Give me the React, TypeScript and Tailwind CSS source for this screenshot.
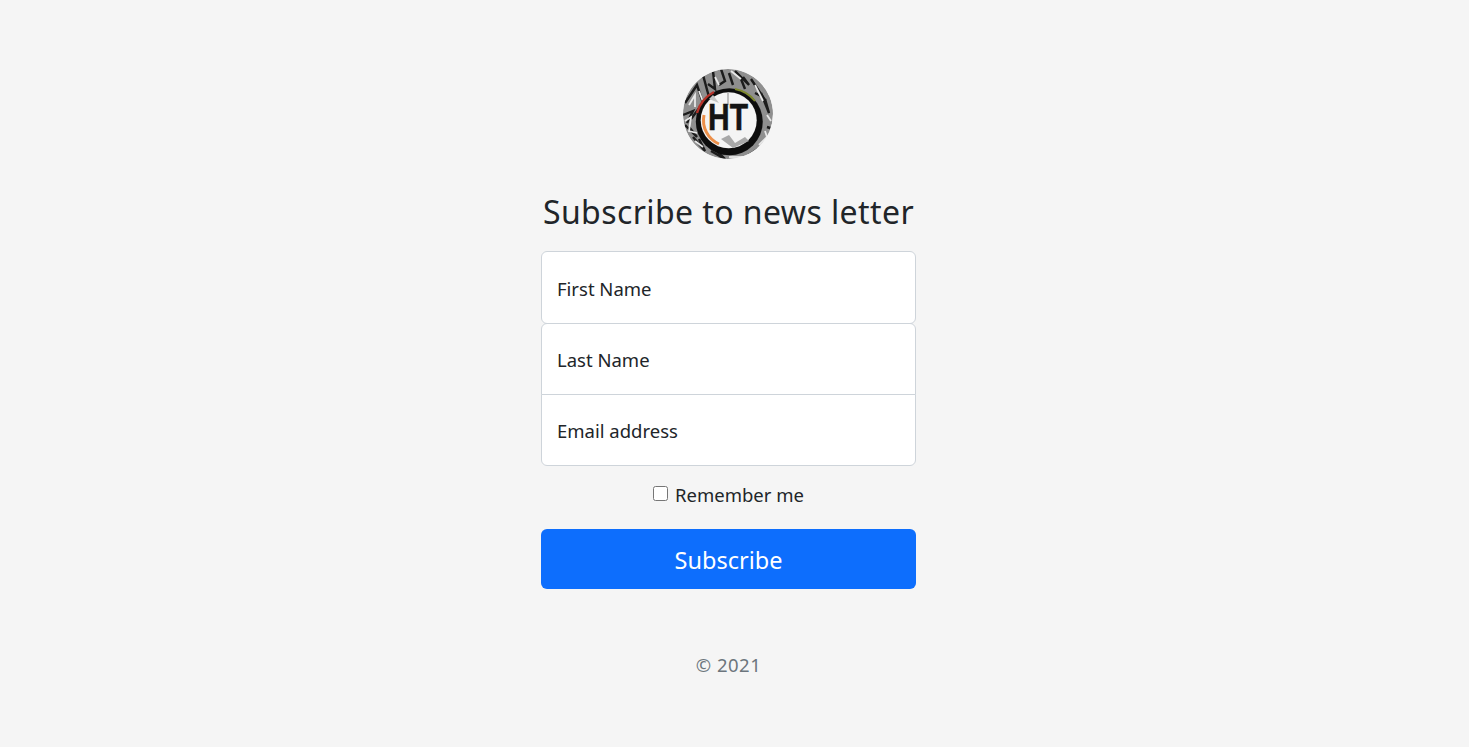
const streaks = [
  'M2 34 L14 16 L20 34 L8 50',
  'M20 6 L26 28',
  'M30 2 L32 20 L25 15',
  'M38 0 L42 12 L36 16',
  'M52 2 L66 16 L60 8',
  'M68 10 L80 28 L72 24',
  'M78 24 L86 44 L82 30',
  'M84 58 L90 60 L80 76',
  'M66 86 L78 78 L72 88',
  'M6 58 L14 68 L2 56',
  'M10 68 L22 82 L16 70',
  'M28 82 L42 90 L32 80',
  'M0 46 L10 42 L4 54',
  'M46 4 L50 16',
  'M58 10 L62 20',
];

const lightStreaks = [
  'M6 36 L12 26 L12 38',
  'M2 52 L8 48 L6 62 L14 64',
  'M12 72 L20 78',
  'M32 8 L36 16',
  'M48 2 L58 10',
  'M72 16 L80 32',
  'M84 46 L88 52',
  'M82 62 L84 68 L76 76',
  'M46 88 L60 88',
  'M16 22 L22 38',
];

const Logo = () => (
  <svg width="90" height="90" viewBox="0 0 90 90" className="block">
    <defs>
      <clipPath id="logo-clip">
        <circle cx="45" cy="45" r="45" />
      </clipPath>
      <filter id="logo-soft">
        <feGaussianBlur stdDeviation="0.7" />
      </filter>
    </defs>
    <g clipPath="url(#logo-clip)">
      <g filter="url(#logo-soft)">
        <rect width="90" height="90" fill="#8f8f8f" />
        <g fill="none" stroke="#1a1a1a" strokeWidth="2.4">
          {streaks.map((d) => (
            <path key={d} d={d} />
          ))}
        </g>
        <g fill="none" stroke="#e8e8e8" strokeWidth="1.8">
          {lightStreaks.map((d) => (
            <path key={d} d={d} />
          ))}
        </g>
        <circle cx="46.3" cy="52.7" r="33.5" fill="#111111" />
        <circle cx="45.7" cy="51.3" r="28" fill="#f4f4f4" />
        <path d="M38 70 L46 66 L52 74 L62 68 L66 72 L50 79 Z" fill="#a8a8a8" />
        <path d="M26 30 L30 26 L36 34 Z" fill="#c4c4c4" />
        <path d="M45 24 L45 36" stroke="#888888" strokeWidth="1" />
        <path d="M21 46 A26 26 0 0 0 36 75" fill="none" stroke="#ec8f4a" strokeWidth="3" />
        <path d="M14 44 A33.5 33.5 0 0 1 31 23" fill="none" stroke="#b5332b" strokeWidth="2.4" />
        <path d="M52 20 A33.5 33.5 0 0 1 72 32" fill="none" stroke="#7f8a2e" strokeWidth="2" />
      </g>
      <text
        x="45"
        y="61"
        textAnchor="middle"
        textLength="40"
        lengthAdjust="spacingAndGlyphs"
        fill="#141414"
        stroke="#141414"
        strokeWidth="0.5"
        fontFamily="'Liberation Sans', sans-serif"
        fontWeight="700"
        fontSize="36"
      >
        HT
      </text>
    </g>
  </svg>
);

const App = () => {
  return (
    <main className="min-h-[747px] bg-[#f5f5f5] flex justify-center pt-[69px] pr-[12px] text-[#212529] font-['Noto_Sans','Open_Sans',sans-serif]">
      <form className="w-[375px] flex flex-col items-center" onSubmit={(e) => e.preventDefault()}>
        <div className="rounded-full overflow-hidden mb-[34px] -ml-px">
          <Logo />
        </div>
        <h1 className="text-[32px] leading-[38px] font-normal mb-[20px] whitespace-nowrap tracking-[0.42px]">
          Subscribe to news letter
        </h1>

        <input
          type="text"
          placeholder="First Name"
          className="w-full h-[73px] -mb-px pt-[1px] px-[15px] bg-white border border-[#ced4da] rounded-[6px] text-[18.5px] placeholder:text-[#212529] outline-none"
        />
        <input
          type="text"
          placeholder="Last Name"
          className="relative w-full h-[72px] -mb-px px-[15px] bg-white border border-[#ced4da] rounded-t-[6px] text-[18.5px] placeholder:text-[#212529] outline-none"
        />
        <input
          type="email"
          placeholder="Email address"
          className="w-full h-[72px] px-[15px] bg-white border border-[#ced4da] rounded-b-[6px] text-[18.5px] placeholder:text-[#212529] outline-none"
        />

        <label className="flex items-center mt-[15px] mb-[21px] h-[27px] text-[18.5px] leading-[27px]">
          <input type="checkbox" className="w-[15px] h-[15px] mr-[7px] -mt-[2px] accent-[#0d6efd]" />
          Remember me
        </label>

        <button
          type="submit"
          className="w-full h-[60px] pt-[3px] bg-[#0d6efd] text-white rounded-[6px] text-[23.5px]"
        >
          Subscribe
        </button>

        <p className="mt-[62px] text-[18.5px] leading-[28px] tracking-[0.5px] text-[#6c757d]">© 2021</p>
      </form>
    </main>
  );
};

export default App;
